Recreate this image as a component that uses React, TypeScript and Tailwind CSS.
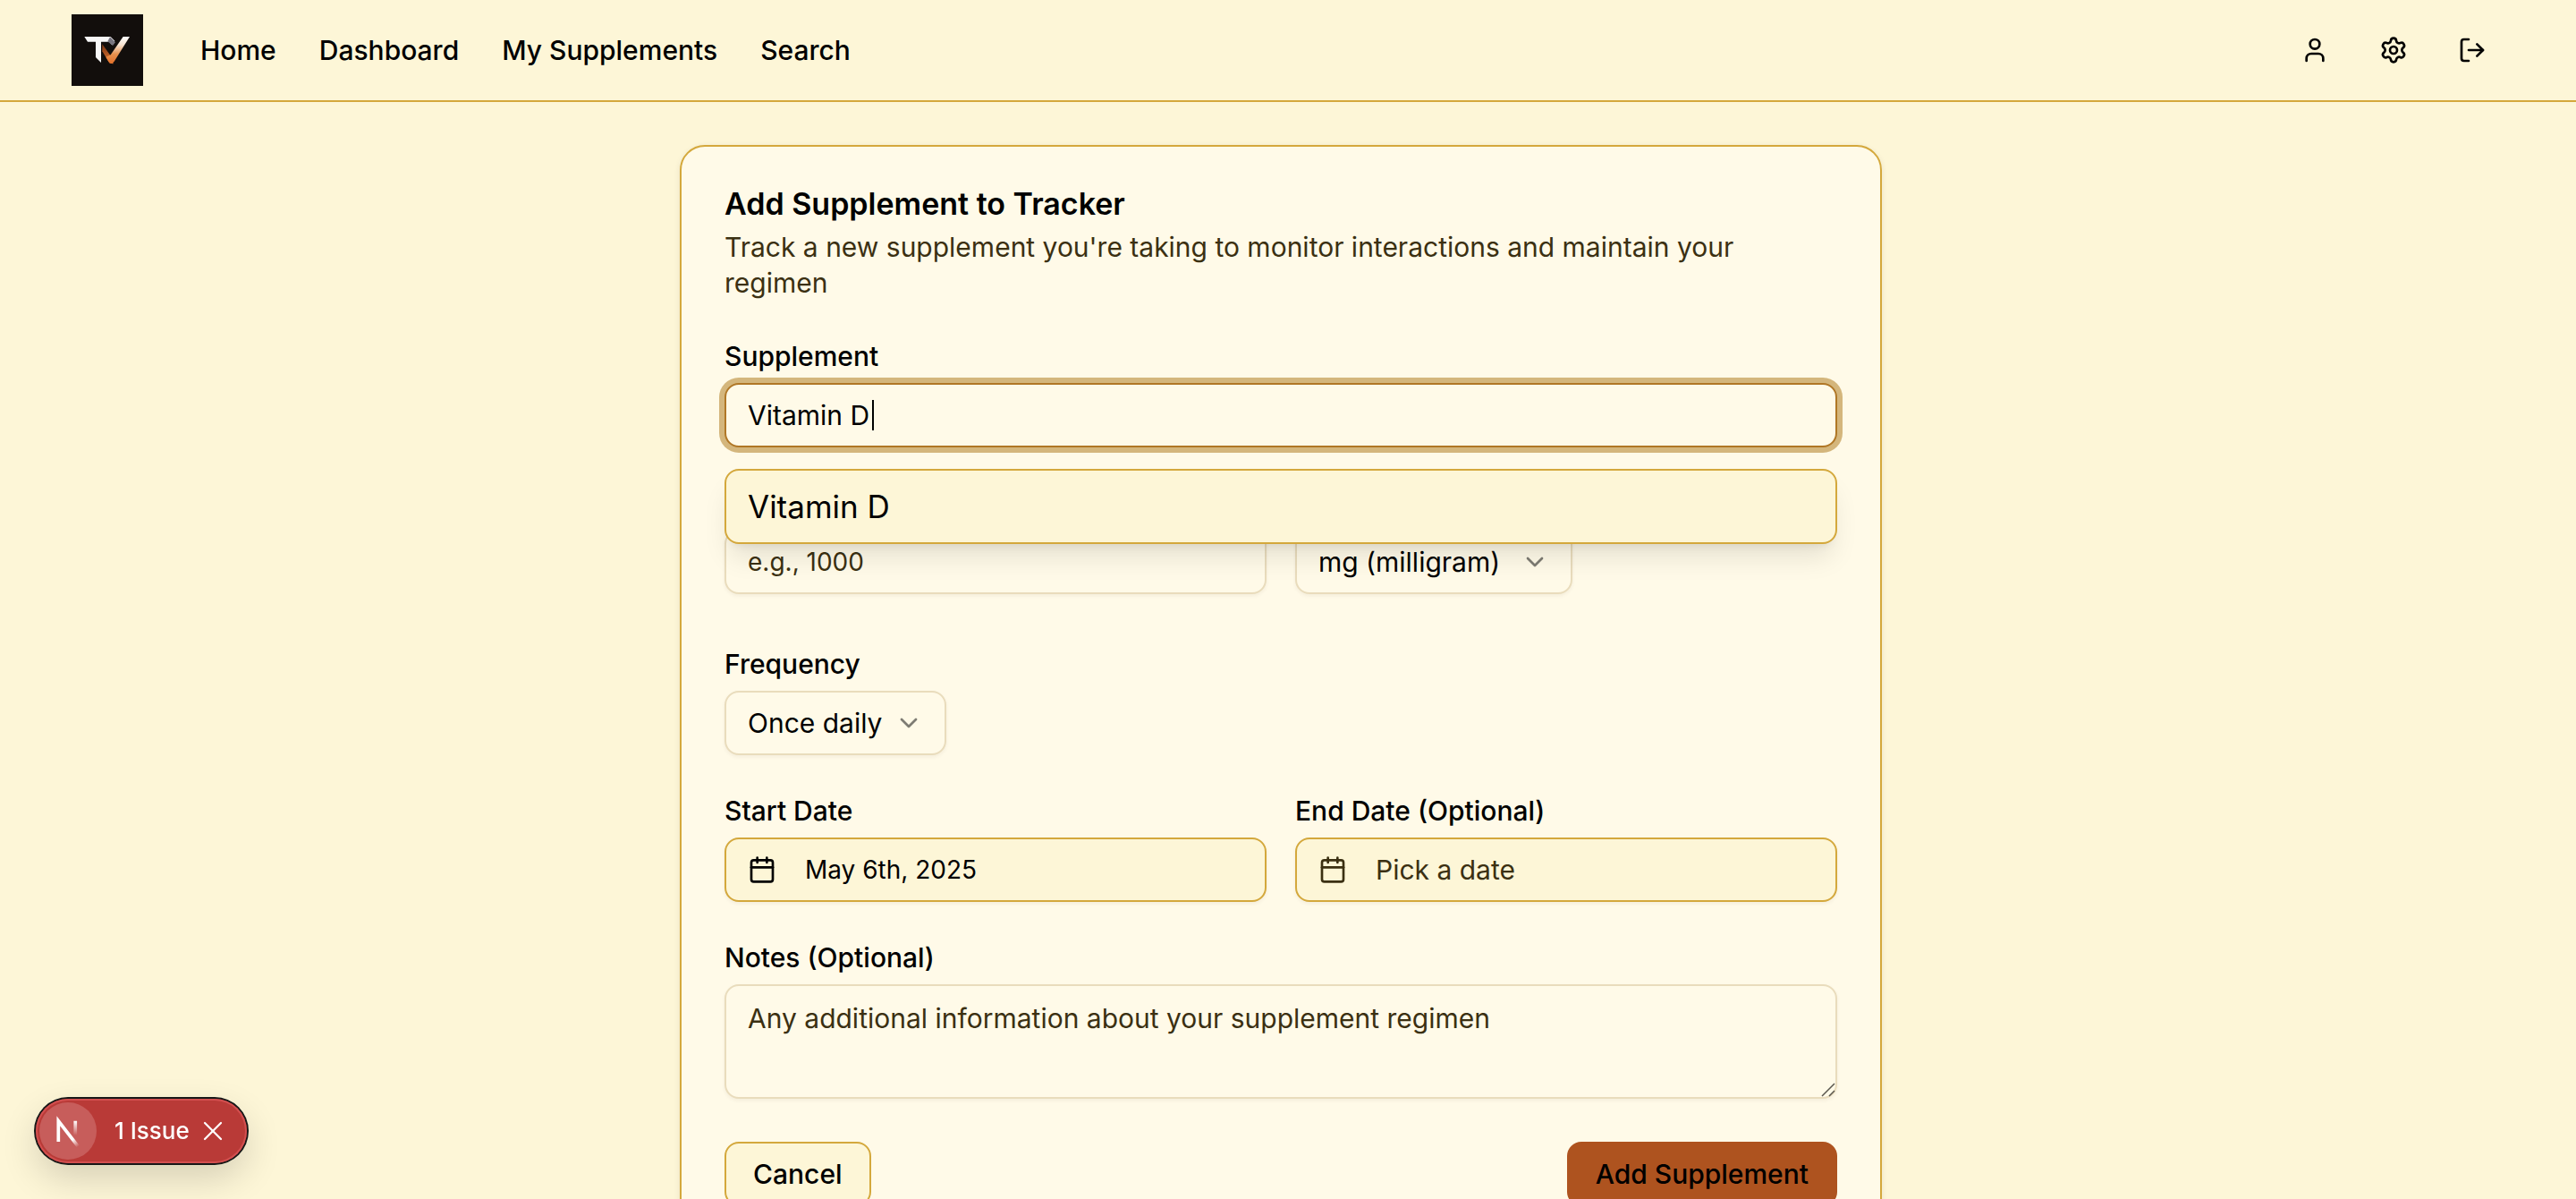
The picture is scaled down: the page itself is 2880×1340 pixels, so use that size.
import { useState } from "react";
import type { ReactNode } from "react";
import { Calendar, ChevronDown, LogOut, Settings, User, X } from "lucide-react";

const fieldBox =
  "h-18 rounded-2xl border-2 border-[#e9dcbc] bg-[#fffae8] shadow-[0_2px_4px_rgba(60,40,0,0.06)] leading-10 outline-none";

function BrandLogo() {
  return (
    <svg viewBox="0 0 240 240" className="block size-20 bg-[#120e0c]" role="img" aria-label="TV">
      <defs>
        <linearGradient id="brand-v" x1="0" y1="0" x2="0" y2="1">
          <stop offset="0" stopColor="#ffffff" />
          <stop offset="0.3" stopColor="#f6e3d2" />
          <stop offset="0.65" stopColor="#e8924f" />
          <stop offset="1" stopColor="#e2702a" />
        </linearGradient>
        <linearGradient id="brand-v-left" x1="0" y1="0" x2="0" y2="1">
          <stop offset="0" stopColor="#7a3512" />
          <stop offset="1" stopColor="#e87a35" />
        </linearGradient>
      </defs>
      <path d="M43 75h88l14 14-10 14-8-11H99v70L81 144V92H54z" fill="#f7f7f7" />
      <path d="M129 76l18 18-9 11-17-14z" fill="#77757f" />
      <path d="M103 100l29 40 8 26-12-2-25-40z" fill="url(#brand-v-left)" />
      <path d="M173 75h22l-52 83q-9 12-19 1l-9-16 16-7z" fill="url(#brand-v)" />
    </svg>
  );
}

function NextMark() {
  return (
    <svg viewBox="0 0 32 32" className="size-16 rounded-full bg-[#c75d5b]" fill="none" aria-hidden="true">
      <defs>
        <linearGradient id="next-diagonal" x1="8.45" y1="8.64" x2="13.5" y2="15.2" gradientUnits="userSpaceOnUse">
          <stop stopColor="#fff" />
          <stop offset="0.4" stopColor="#fff" />
          <stop offset="1" stopColor="#fff" stopOpacity="0" />
        </linearGradient>
        <linearGradient id="next-stem" x1="11.8" y1="1" x2="11.9" y2="9" gradientUnits="userSpaceOnUse">
          <stop stopColor="#fff" />
          <stop offset="1" stopColor="#fff" stopOpacity="0" />
        </linearGradient>
      </defs>
      <g transform="translate(8.3 9.4)">
        <path d="M13.3 15.2L2.34 1v11.6" stroke="url(#next-diagonal)" strokeWidth="1.86" />
        <path d="M11.82 1v9" stroke="url(#next-stem)" strokeWidth="1.86" />
      </g>
    </svg>
  );
}

function Field({ id, label, children }: { id: string; label: string; children: ReactNode }) {
  return (
    <div className="flex flex-col items-start gap-4">
      <label htmlFor={id} className="text-[30px] leading-7 font-medium">
        {label}
      </label>
      {children}
    </div>
  );
}

function SelectBox({ id, value, label, className }: { id: string; value: string; label?: string; className: string }) {
  return (
    <div className={`relative ${className}`}>
      <select id={id} aria-label={label} className={`${fieldBox} w-full appearance-none pr-16 pl-6 text-[30px]`}>
        <option>{value}</option>
      </select>
      <ChevronDown className="pointer-events-none absolute top-5 right-[26px] size-8 opacity-50" aria-hidden="true" />
    </div>
  );
}

function DateButton({ id, value, className }: { id: string; value: string; className: string }) {
  return (
    <button
      id={id}
      type="button"
      className={`flex h-18 w-full items-center gap-8 rounded-2xl border-2 border-[#d4a83c] bg-[#fdf6d7] px-6 leading-10 shadow-[0_2px_4px_rgba(60,40,0,0.06)] ${className}`}
    >
      <Calendar className="size-8" aria-hidden="true" />
      {value}
    </button>
  );
}

export default function App() {
  const [supplement, setSupplement] = useState("Vitamin D");

  return (
    <div className="min-h-screen bg-[#fdf6d7] font-['Inter',sans-serif] text-black">
      <header className="flex items-center justify-between border-b-2 border-[#d4a83c] px-20 py-4">
        <div className="flex items-center gap-16">
          <a href="#home">
            <BrandLogo />
          </a>
          <nav className="flex gap-12 text-[30px] leading-10 font-medium">
            <a href="#home">Home</a>
            <a href="#dashboard">Dashboard</a>
            <a href="#supplements">My Supplements</a>
            <a href="#search">Search</a>
          </nav>
        </div>
        <div className="flex gap-4">
          <button type="button" aria-label="Profile" className="flex size-18 items-center justify-center">
            <User className="size-8" />
          </button>
          <button type="button" aria-label="Settings" className="flex size-18 items-center justify-center">
            <Settings className="size-8" />
          </button>
          <button type="button" aria-label="Log out" className="flex size-18 items-center justify-center">
            <LogOut className="size-8" />
          </button>
        </div>
      </header>

      <main className="py-12 pr-4">
        <section className="mx-auto flex max-w-[1344px] flex-col gap-12 rounded-[28px] border-2 border-[#d4a83c] bg-[#fffae8] p-12 shadow-[0_2px_6px_rgba(60,40,0,0.1)]">
          <div className="flex flex-col gap-3">
            <h1 className="text-[34px] leading-8 font-semibold">Add Supplement to Tracker</h1>
            <p className="text-[30px] leading-10 text-[#3b3012]">
              Track a new supplement you're taking to monitor interactions and maintain your
              <br />
              regimen
            </p>
          </div>

          <form className="flex flex-col gap-12">
            <div className="relative">
              <Field id="supplement" label="Supplement">
                <div className="relative w-full">
                  <input
                    id="supplement"
                    type="text"
                    autoComplete="off"
                    value={supplement}
                    onChange={(e) => setSupplement(e.target.value)}
                    className="block h-18 w-full rounded-2xl border-2 border-[#b07726] bg-[#fffae8] px-6 text-[30px] leading-10 ring-6 ring-[#d4b67c] outline-none"
                  />
                  <span className="absolute top-[19px] left-[165px] h-[34px] w-[2px] bg-black" />
                </div>
              </Field>
              <ul className="absolute top-full left-0 z-10 mt-6 w-full rounded-2xl border-2 border-[#d4a83c] bg-[#fdf6d7] shadow-[0_20px_30px_-6px_rgba(0,0,0,0.1),0_8px_12px_-8px_rgba(0,0,0,0.1)]">
                <li>
                  <button type="button" className="block w-full px-6 py-4 text-left text-[35px] leading-12">
                    Vitamin D
                  </button>
                </li>
              </ul>
            </div>

            <div className="grid grid-cols-2 gap-8 pt-11 pb-4">
              <input
                id="dosage"
                type="text"
                aria-label="Dosage"
                placeholder="e.g., 1000"
                className={`${fieldBox} w-full px-6 text-[28px] placeholder:text-[#3b3012]`}
              />
              <SelectBox id="unit" label="Unit" value="mg (milligram)" className="w-[310px]" />
            </div>

            <Field id="frequency" label="Frequency">
              <SelectBox id="frequency" value="Once daily" className="w-[248px]" />
            </Field>

            <div className="grid grid-cols-2 gap-8">
              <Field id="start-date" label="Start Date">
                <DateButton id="start-date" value="May 6th, 2025" className="text-[28px]" />
              </Field>
              <Field id="end-date" label="End Date (Optional)">
                <DateButton id="end-date" value="Pick a date" className="text-[30px] text-[#3b3012]" />
              </Field>
            </div>

            <Field id="notes" label="Notes (Optional)">
              <div className="relative w-full">
                <textarea
                  id="notes"
                  placeholder="Any additional information about your supplement regimen"
                  className="block h-32 w-full resize-none rounded-2xl border-2 border-[#e9dcbc] bg-[#fffae8] px-6 py-4 text-[30px] leading-10 shadow-[0_2px_4px_rgba(60,40,0,0.06)] outline-none placeholder:text-[#3b3012]"
                />
                <svg viewBox="0 0 16 16" className="absolute right-0.5 bottom-0.5 size-4" stroke="#5a574e" strokeWidth="1.5" aria-hidden="true">
                  <path d="M1 15L15 1M9 15l6-6" />
                </svg>
              </div>
            </Field>

            <div className="flex justify-between">
              <button type="button" className="h-18 rounded-2xl border-2 border-[#d4a83c] bg-[#fdf6d7] px-[30px] text-[30px] leading-10 font-medium">
                Cancel
              </button>
              <button type="submit" className="h-18 rounded-2xl bg-[#ae531f] px-8 text-[30px] leading-10 font-medium">
                Add Supplement
              </button>
            </div>
          </form>
        </section>
      </main>

      <div className="fixed bottom-10 left-10 z-20 flex h-18 w-[236px] items-center rounded-full bg-[#b93a37] px-1 text-white shadow-[inset_0_0_0_2px_#d24f4f,0_0_0_2px_#171717,0_16px_40px_rgba(0,0,0,0.16)]">
        <NextMark />
        <button type="button" className="ml-5 text-[26px] leading-8 font-medium">
          1 Issue
        </button>
        <button type="button" aria-label="Dismiss" className="ml-2">
          <X className="size-9" strokeWidth={1.5} />
        </button>
      </div>
    </div>
  );
}
